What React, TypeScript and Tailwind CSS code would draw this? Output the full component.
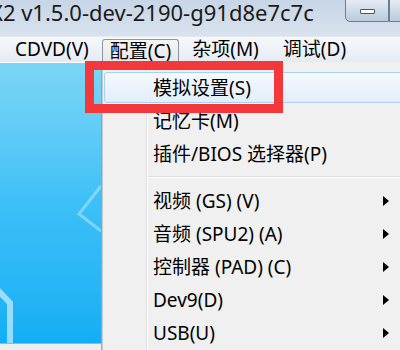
const font = { fontFamily: '"Noto Sans", "Noto Sans CJK SC", sans-serif' };

type Item = { label: string; sub?: boolean; hover?: boolean };

const topItems: Item[] = [
  { label: '模拟设置(S)', hover: true },
  { label: '记忆卡(M)' },
  { label: '插件/BIOS 选择器(P)' },
];

const subItems: Item[] = [
  { label: '视频 (GS) (V)', sub: true },
  { label: '音频 (SPU2) (A)', sub: true },
  { label: '控制器 (PAD) (C)', sub: true },
  { label: 'Dev9(D)', sub: true },
  { label: 'USB(U)', sub: true },
];

function MenuRow({ item }: { item: Item }) {
  return (
    <div className="relative flex h-[33px] items-center">
      {item.hover && (
        <div className="absolute inset-y-[1px] left-[1px] right-[-20px] rounded-[3px] border border-[#a8d2f2] bg-gradient-to-b from-[#f4f9fe] to-[#e3eefa]" />
      )}
      <span className="relative ml-[50px] mt-[2px] text-[19px] leading-none text-black">{item.label}</span>
      {item.sub && (
        <span className="absolute right-[11px] top-[12px] h-0 w-0 border-y-[5px] border-l-[6px] border-y-transparent border-l-black" />
      )}
    </div>
  );
}

export default function App() {
  return (
    <div className="relative h-[350px] w-[400px] overflow-hidden bg-[#f0f0f0]" style={font}>
      {/* title bar */}
      <div className="relative h-[36px] bg-gradient-to-b from-[#c7d5e6] to-[#d9e3ef]">
        <span className="absolute left-[-10px] top-[-3px] text-[22px] leading-[30px] text-[#1a1a1a]">X2 v1.5.0-dev-2190-g91d8e7c7c</span>
        <div className="absolute left-[345px] top-[-2px] flex h-[24px] w-[44px] items-center justify-center rounded-bl-[5px] border border-[#6d7d93] bg-gradient-to-b from-[#e7edf5] to-[#bccadc]">
          <div className="mt-[2px] h-[5px] w-[15px] rounded-[1px] border border-[#4a5566] bg-white" />
        </div>
        <div className="absolute left-[389px] top-[-2px] h-[24px] w-[30px] border border-[#6d7d93] bg-gradient-to-b from-[#e7edf5] to-[#bccadc]" />
      </div>

      {/* menu bar */}
      <div className="flex h-[26px] items-center border-t border-[#e4e9f1] bg-gradient-to-b from-[#f6f8fb] to-[#e6ebf3] text-[19px] leading-none text-black">
        <span className="ml-[15px]">CDVD(V)</span>
        <span className="ml-[13px] mt-[3px] flex h-[24px] items-center rounded-t-[3px] border border-b-0 border-[#8b96a3] bg-gradient-to-b from-[#f6f6f6] to-[#e4e6e9] px-[7px]">配置(C)</span>
        <span className="ml-[13px]">杂项(M)</span>
        <span className="ml-[24px]">调试(D)</span>
      </div>

      {/* body */}
      <div className="flex h-[288px]">
        <div className="flex w-[102px] flex-col">
          <div className="relative h-[281px] overflow-hidden border-r border-[#9aa3ad] border-t border-t-white bg-gradient-to-b from-[#7ad6f5] via-[#3cc0f7] to-[#12aef4]">
            <svg className="absolute left-0 top-0" width="101" height="281" viewBox="0 0 101 281">
              <path d="M101 123 L79 151 L101 168" fill="none" stroke="#ffffff" strokeOpacity="0.35" strokeWidth="3" />
              <path d="M-4 225 L10 240 L10 281" fill="none" stroke="#ffffff" strokeOpacity="0.55" strokeWidth="6" />
            </svg>
          </div>
          <div className="flex-1 border-r border-t border-[#a9b0b8] bg-[#eeeeee]" />
        </div>

        <div className="relative flex-1 border-l border-[#c9c9c9] bg-[#f0f0f0]">
          <div className="absolute bottom-0 left-[43px] top-0 w-[2px] border-l border-[#e0e0e0] bg-white" />
          <div className="relative pt-[9px]">
            {topItems.map((it) => (
              <MenuRow key={it.label} item={it} />
            ))}
            <div className="ml-[45px] my-[6px] h-[2px] border-t border-[#e0e0e0] bg-white" />
            {subItems.map((it) => (
              <MenuRow key={it.label} item={it} />
            ))}
          </div>
        </div>
      </div>

      {/* red highlight box */}
      <div className="absolute left-[85px] top-[61px] h-[52px] w-[198px] border-[9px] border-[#f2383b]" />
    </div>
  );
}
